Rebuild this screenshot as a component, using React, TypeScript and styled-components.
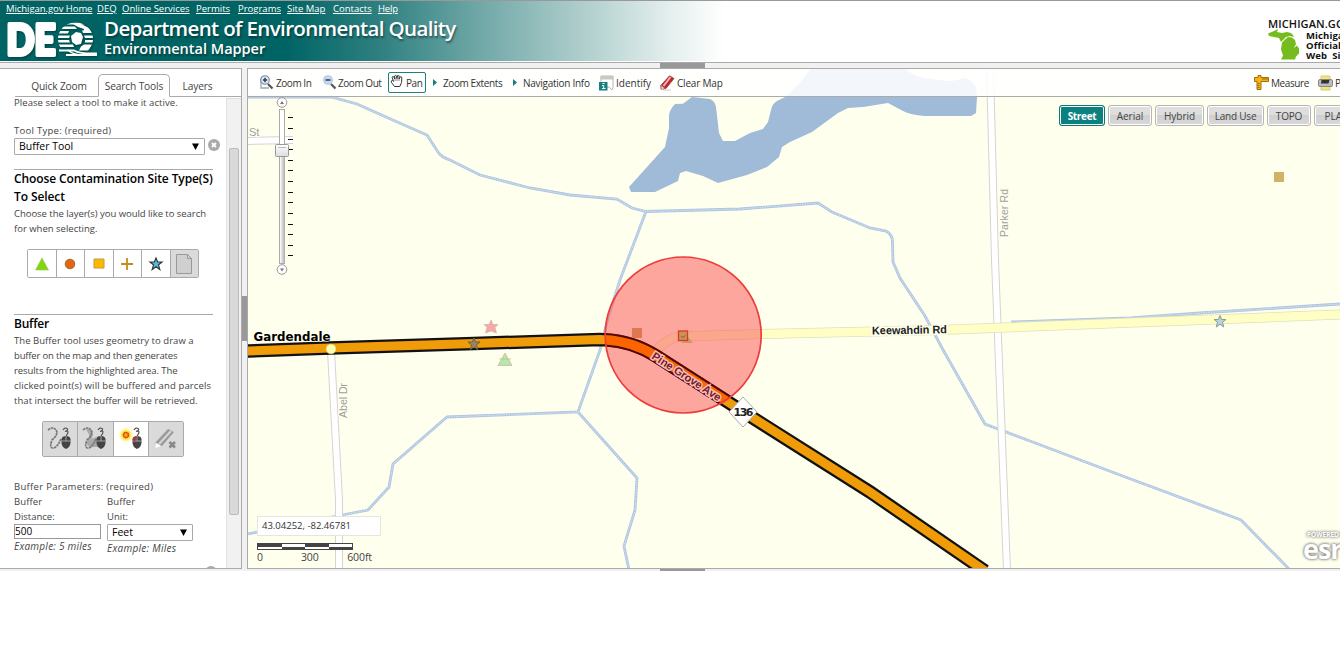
import React from "react";
import styled, { createGlobalStyle, css } from "styled-components";

const Global = createGlobalStyle`
  * { box-sizing: border-box; }
  html, body { margin: 0; padding: 0; background: #fff; overflow: hidden; }
  body { font-family: "Open Sans", "Liberation Sans", sans-serif; font-size: 10px; color: #444; }
  p, h1, h2, h3 { margin: 0; font-weight: normal; }
`;

const Page = styled.div`width: 1340px; height: 654px; overflow: hidden; display: flex; flex-direction: column;`;

const Header = styled.header`
  height: 63px; flex: none; display: flex; flex-direction: column; position: relative;
  border-top: 1px solid #999; border-bottom: 1px solid #aaa;
  background: linear-gradient(90deg, #006363 0, #006464 285px, #2f8080 380px, #70a8a7 480px, #b3d1cf 590px, #e4efee 670px, #fff 725px);
  &::after { content: ""; position: absolute; left: 0; right: 0; bottom: 0; height: 1px; background: #fff; }
`;
const TopLinks = styled.nav`display: flex; height: 17px; padding-left: 6px; gap: 7px; line-height: 15px; flex: none;`;
const TopLink = styled.a<{ $w: number; $ls?: number }>`
  color: #fff; text-decoration: underline; white-space: nowrap; font-size: 9.5px;
  width: ${p => p.$w}px; letter-spacing: ${p => p.$ls ?? 0}px;
`;
const Brand = styled.div`display: flex; padding-left: 4px; height: 44px;`;
const Titles = styled.div`padding-left: 7px; margin-top: -2px; color: #fff; text-shadow: 1px 2px 2px rgba(0,30,30,.55); white-space: nowrap; flex: 1;`;
const Title = styled.h1`font: 600 20.5px/24px "Open Sans", sans-serif; letter-spacing: -0.64px;`;
const Subtitle = styled.h2`font: 600 14.5px/18px "Open Sans", sans-serif; letter-spacing: 0;`;
const StateSite = styled.div`
  width: 72px; flex: none; color: #111; white-space: nowrap;
  font: 600 11px/12px "Open Sans", sans-serif; letter-spacing: .1px;
`;
const StateRow = styled.div`display: flex; gap: 6px; font: 700 9.5px/10px "Open Sans", sans-serif; padding-top: 1px; svg { flex: none; margin-top: -2px; }`;

const HGap = styled.div`height: 5px; flex: none; background: #f1f1f1; padding-left: 660px;`;
const HGrip = styled.div`width: 45px; height: 100%; background: #999;`;
const Body = styled.main`height: 501px; flex: none; display: flex;`;
const VGap = styled.div`width: 5px; flex: none; background: #f1f1f1; padding-top: 228px;`;
const VGrip = styled.div`width: 5px; height: 45px; background: #999;`;

const Side = styled.aside`width: 242px; flex: none; border: 1px solid #aaa; border-left: 0; display: flex; flex-direction: column; overflow: hidden;`;
const Tabs = styled.div`height: 28px; flex: none; display: flex; align-items: flex-end; padding-left: 15px;`;
const Tab = styled.div<{ $w: number; $active?: boolean; $pad?: number }>`
  width: ${p => p.$w}px; height: 23px; line-height: 24px; text-align: center; font-size: 10.2px; letter-spacing: -.15px; white-space: nowrap;
  border-bottom: 1px solid #aaa; padding-left: ${p => p.$pad ?? 0}px;
  ${p => p.$active && css`border: 1px solid #aaa; border-bottom-color: #fff; border-radius: 5px 5px 0 0; line-height: 22px;`}
`;
const TabFill = styled.div`flex: 1; height: 23px; border-bottom: 1px solid #aaa;`;
const Scroller = styled.div`flex: 1; min-height: 0; display: flex; overflow: hidden;`;
const Content = styled.div`flex: 1; padding-left: 14px; margin-top: -2px; white-space: nowrap; line-height: 15px;`;
const Track = styled.div`width: 15px; flex: none; margin-top: 1px; padding: 49px 2px 0; background: #f1f1f1; border-left: 1px solid #e2e2e2; border-top: 1px solid #ddd;`;
const Thumb = styled.div`width: 10px; height: 367px; background: #d9d9d9; border: 1px solid #bbb; border-radius: 2px;`;

const Line = styled.p<{ $ls?: number; $gap?: number }>`height: 15px; letter-spacing: ${p => p.$ls ?? 0}px; margin-bottom: ${p => p.$gap ?? 0}px; font-size: 9.5px;`;
const Heading = styled.h3<{ $ls?: number }>`font-weight: 600; font-size: 12px; line-height: 18px; color: #000; letter-spacing: ${p => p.$ls ?? 0}px;`;
const Rule = styled.div<{ $top: number }>`width: 199px; height: 1px; background: #aaa; margin-top: ${p => p.$top}px;`;
const Row = styled.div`display: flex;`;
const Select = styled.div<{ $w: number }>`
  width: ${p => p.$w}px; height: 17px; border: 1px solid #aaa; border-radius: 1px; color: #000; padding: 0 5px 0 4px;
  display: flex; justify-content: space-between; align-items: center; font-size: 10.5px; line-height: 15px;
`;
const Field = styled.div`width: 87px; height: 15px; border: 1px solid #999; color: #000; font-size: 10px; line-height: 13px;`;
const Down = () => <svg width="7" height="7" viewBox="0 0 7 7"><path d="M0 .5H7L3.500 7Z" fill="#000" /></svg>;
const Clear = styled.div`padding: 1px 0 0 3px; height: 17px;`;
const ButtonBar = styled.div<{ $h: number; $left: number; $w: number }>`
  display: flex; height: ${p => p.$h}px; width: ${p => p.$w}px; margin-left: ${p => p.$left}px;
  border: 1px solid #aaa; border-radius: 2px; overflow: hidden;
`;
const BarButton = styled.div<{ $off?: boolean }>`
  flex: 1; display: flex; align-items: center; justify-content: center; background: ${p => p.$off ? "#dadada" : "#fff"};
  & + & { border-left: 1px solid #aaa; }
`;
const Column = styled.div<{ $w: number }>`width: ${p => p.$w}px;`;
const Hint = styled.p<{ $ls?: number }>`font-style: italic; letter-spacing: ${p => p.$ls ?? 0}px; font-size: 10px;`;
const Params = styled.div`padding-top: 22px;`;
const NextClear = styled.div`width: 12px; height: 12px; border-radius: 6px; background: #aaa; margin: 10px 0 0 191px;`;
const BottomGap = styled(HGap)`height: 2px;`;

const MapPane = styled.section`flex: 1; min-width: 0; border: 1px solid #aaa; border-right: 0; position: relative; overflow: hidden; background: #ffffee;`;
const MapSvg = styled.svg`position: absolute; left: 0; top: 0; display: block;`;
const Toolbar = styled.div`
  position: absolute; left: 0; top: 0; right: 0; height: 28px; padding: 0 0 0 11px; border-bottom: 1px solid #aaa;
  background: rgba(255,255,255,.88); display: flex; align-items: center; white-space: nowrap; overflow: hidden;
`;
const Tool = styled.div<{ $w: number; $ls?: number; $gap?: number }>`
  width: ${p => p.$w}px; height: 28px; flex: none; display: flex; align-items: center; gap: ${p => p.$gap ?? 2}px;
  letter-spacing: ${p => p.$ls ?? 0}px; font-size: 10px; color: #333;
  span { padding-top: 1px; }
  svg { flex: none; }
`;
const PanTool = styled(Tool)`height: 21px; border: 1px solid #1a8080; border-radius: 2px; padding-left: 1px; margin-right: 7px; svg { margin-top: -3px; }`;
const Spacer = styled.div`flex: 1;`;
const Layers = styled.div`position: absolute; left: 811px; top: 36px; display: flex; gap: 3px;`;
const Layer = styled.div<{ $w: number; $on?: boolean; $ls?: number }>`
  width: ${p => p.$w}px; height: 21px; border-radius: 3px; border: 1px solid ${p => p.$on ? "#0a7a78" : "#b5b5b5"};
  box-shadow: inset 0 0 0 1px #fff; text-align: center; line-height: 20px; font-size: 10px; flex: none;
  color: ${p => p.$on ? "#fff" : "#444"}; font-weight: ${p => p.$on ? 700 : 400}; letter-spacing: ${p => p.$ls ?? 0}px;
  background: ${p => p.$on ? "#0b8280" : "linear-gradient(#dedede 0 48%, #d0d0d0 50%, #d8d8d8)"};
`;
const Coords = styled.div`position: absolute; left: 9px; top: 447px; width: 124px; height: 20px; background: #fff; border: 1px solid #e6e6dc; padding-left: 4px; line-height: 18px; font-size: 9.5px; color: #333;`;
const ScaleBar = styled.div`position: absolute; left: 9px; top: 474px; width: 96px; height: 7px; border: 1px solid #444; display: grid; grid-template-columns: repeat(4, 1fr); grid-template-rows: 1fr 1fr;`;
const ScaleCell = styled.div<{ $dark?: boolean }>`background: ${p => p.$dark ? "#444" : "#fff"};`;
const ScaleText = styled.div`position: absolute; left: 9px; top: 481px; width: 115px; display: flex; font-size: 10.5px; line-height: 14px; color: #444; span:nth-child(2) { margin: 0 auto 0 38px; } span { letter-spacing: -.1px; }`;
const Esri = styled.div`
  position: absolute; left: 1056px; top: 462px; color: #fff; white-space: nowrap; text-shadow: 0 0 3px #777, 0 0 3px #888;
  small { display: block; font: 700 6.5px/8px "Open Sans", sans-serif; padding-left: 3px; }
  b { display: block; font: 700 27px/20px "Open Sans", sans-serif; letter-spacing: -1px; margin-left: -1px; }
`;

const Globe = () => (
  <svg width="93" height="42" viewBox="4 18 93 42">
    <defs><clipPath id="globe"><ellipse cx="75.500" cy="39" rx="17.500" ry="16.500" /></clipPath></defs>
    <g fill="#fff" stroke="#fff" style={{ filter: "drop-shadow(1px 1.5px .8px rgba(0,30,30,.5))" }}>
      <text x="6.500" y="54.500" fontFamily="Lato, Open Sans" fontWeight="900" fontSize="41.500" strokeWidth="4" strokeLinejoin="round" textLength="49" lengthAdjust="spacingAndGlyphs">DE</text>
      <g clipPath="url(#globe)" stroke="none">
        <path d="M66 22.500h20v2H62zM60 26.500h15l2 2.500H58zM58 31h11l-1 2.500H56zM57 35.500h13l-1 2.500H56zM56 40h13l1 2.500H57zM57 44.500h16l1 2.500H59z" />
        <path d="M73 24h8l10 5v4h-8l1-4-6-2zM82 30.500h10v2.500h-9zM84 35.500h10v2.500h-9zM76 32l5 1 2 4-2 7-5 1-4-3-1-6zM85 40h8v2.500h-8zM84 44.500h8l-3 6H79l2-4z" />
      </g>
      <path d="M59 50.500H74Q80 54 97 53.500M66 55H97" fill="none" strokeWidth="1.900" />
      <path d="M68 50q5 5 15 5" strokeWidth="1.500" fill="none" />
    </g>
  </svg>
);
const Michigan = () => (
  <svg width="32" height="32" viewBox="0 0 32 32" fill="#77bc1f">
    <path d="M0 4.500l6-2.500 4-2-1 3 5 1 5-1 4 1 2 2 1 2-4-1-4 1-3 3-2 2-2-4-5-1-5-1z" />
    <path d="M20 8l4 .5 3 2.500 1 4-2 4 3-2.500 2 3 0 5-3 3-1 3H13l2-4-2-6 1-7 3-3z" />
  </svg>
);
const Magnifier = ({ plus }: { plus?: boolean }) => (
  <svg width="15" height="15" viewBox="0 0 15 15">
    {plus && <path d="M2 6v7h8M2 4v8" fill="none" stroke="#9aa8b8" strokeWidth="1.300" />}
    <path d="M9 9l4.500 4.500" stroke="#555" strokeWidth="2.200" />
    <circle cx="6" cy="5" r="4.300" fill={plus ? "#dce8f4" : "#c7d8f0"} stroke={plus ? "#7b8998" : "#b4c2d8"} strokeWidth="1.100" />
    <path d={plus ? "M3.800 5h4.400M6 2.800v4.400" : "M3.500 5h5"} stroke="#253e68" strokeWidth="1.500" />
  </svg>
);
const Hand = () => (
  <svg width="14" height="14" viewBox="0 0 14 14"><path d="M4.500 12.500L1.500 8.500Q.5 6.500 2.500 6.500L3.500 7.500 2.200 3.500Q2.300 2 3.700 2.700L5 5 4.500 2Q5.300.5 6.300 1.800L7 4.600 7.500 1.600Q8.700.7 9.200 2L9 5 10.300 2.800Q11.700 2.300 11.800 3.800L11.500 8.500 9.800 12.500Z" fill="#fff" stroke="#333" strokeWidth="1" /><path d="M5 5v2M7 4.500V7M9 5v2" stroke="#555" strokeWidth=".7" /></svg>
);
const Arrow = () => <svg width="5" height="7" viewBox="0 0 5 7"><path d="M0 0L4 3.500 0 7Z" fill="#167f7e" /></svg>;
const IdentifyIcon = () => (
  <svg width="15" height="16" viewBox="0 0 15 16"><path d="M2 1h12v11l-1 3-3-3H2z" fill="#fff" stroke="#b8b8b8" /><path d="M1.500 1h13v3.500h-13z" fill="#c8c9c0" /><path d="M0 7h8.500v8.500H0z" fill="#17827f" /><path d="M3.500 8.500h2M3 10.500h1.700v3M3 13.500h3.500" stroke="#fff" fill="none" /></svg>
);
const EraserIcon = () => (
  <svg width="15" height="16" viewBox="0 0 15 16"><path d="M3 15h8" stroke="#ccc" /><path d="M9.500.8L14 3.500 6 13.500 1 14 .8 10.500Z" fill="#c9252b" stroke="#873035" strokeWidth=".7" /><path d="M10.500 2L3.500 11" stroke="#f2b6b4" strokeWidth="2" /><path d="M1 10.500l4 3-3.700.8z" fill="#f4e9e6" stroke="#866" strokeWidth=".5" /></svg>
);
const MeasureIcon = () => (
  <svg width="15" height="16" viewBox="0 0 15 16"><path d="M.5 2.500H4V.5h3v2h7.500v4H7v8H3v-8H.5z" fill="#f4b418" stroke="#a66d08" /><path d="M9 3v2m2-2v2m2-2v2M3.500 8.500h2m-2 2h2m-2 2h2" stroke="#855500" strokeWidth=".8" /></svg>
);
const PrintIcon = () => (
  <svg width="15" height="16" viewBox="0 0 15 16"><path d="M3 1h9v4H3zM3 11h9v4H3z" fill="#f5e676" stroke="#d8cc75" /><rect x=".5" y="4.500" width="14" height="7" rx="1.500" fill="#b9bdc0" stroke="#888" /><path d="M3.500 5h8l-1 3.500H3z" fill="#333" /></svg>
);
const star = "M0-6L1.600-2H6L2.500.8 3.800 5.500 0 2.800-3.800 5.500-2.500.8-6-2H-1.600Z";

const Mouse = ({ x, red }: { x: number; red?: boolean }) => (
  <g transform={`translate(${x} 0)`}>
    <path d="M-3 3Q-1 0 1 1.500T-1 4.500Q2 3.500 2 5T0 9" fill="none" stroke="#555" strokeWidth="1.200" />
    <path d="M-4.500 12Q-4 9 0 9T4.500 12V16Q4 20.500 0 22-4 20.500-4.500 16Z" fill="#444" />
    <path d="M-4.500 14h9M0 9v5" stroke="#bbb" strokeWidth=".8" />
    {red && <path d="M-4.300 13.500V12l1.500-2H-.5v3.500z" fill="#b93535" />}
  </g>
);
const Squiggle = ({ filled }: { filled?: boolean }) => (
  <svg width="26" height="24" viewBox="0 0 26 24">
    {filled && <path d="M4 3Q8 0 10 5T9 12L17 9V20H8Q3 18 6 13 9 8 4 3Z" fill="#aaa" />}
    <path d="M1 3Q6-1 9 3T5 13Q2 21 6 21T14 12" fill="none" stroke="#777" strokeWidth="1.700" strokeDasharray="2.500 .6" />
    <Mouse x={19} />
  </svg>
);
const PointMouse = () => (
  <svg width="26" height="24" viewBox="0 0 26 24">
    <defs><radialGradient id="glow"><stop offset=".4" stopColor="#ffd800" /><stop offset="1" stopColor="#fff7b0" stopOpacity="0" /></radialGradient></defs>
    <circle cx="8" cy="8" r="8" fill="url(#glow)" /><circle cx="8" cy="8" r="2.500" fill="#fa2" stroke="#d33a12" strokeWidth="1.600" strokeDasharray="1.500 .4" />
    <Mouse x={19} red />
  </svg>
);
const GrayEraser = () => (
  <svg width="26" height="24" viewBox="0 0 26 24"><path d="M15 2l6 3L9 19l-6 1-1-4z" fill="#999" /><path d="M18 4L6 17" stroke="#d5d5d5" strokeWidth="2.200" /><path d="M2.500 15.500l6 3.500-6 2z" fill="#fff" /><path d="M16.500 15l5.500 5.500m0-5.500l-5.500 5.500" stroke="#888" strokeWidth="2.600" /></svg>
);

const stream = "M248 97H331L357 104 395 121 427 135 438 152Q441 157 450 160L480 175 530 188 570 195 617 199 632 208 646 211.500 740 209 818 203 832 212 870 228 886 231Q893 235 892.500 243L893 262 900 278 925 316 942 348 985 424 1030 441 1120 475 1241 520 1290 570M646 211.500L620 280 608 318 600 350 578 412 447 417 393 464 389 487 368 510 342 515 248 534M578 412L637 478 635 510 624 546 629 570M1011 322L1130 318 1200 313 1340 304";
const road = "M246 351L330 348 474 343.500 600 339.500Q631 340 656 356L742 411 870 492 985 571";
const lake = "M629 187L665 147 669 128V115Q670 109 675 104L683 103.700 692 97 710 99Q715 101 716 107L719 133 723 141H735L750 133 763 129 768 122 771 110Q772 104 777 101L785 97 800 83 811 68H905Q914 77 925 78L947 81Q956 81 963 78 972 79 976 87L977 97 976 113 971 116H925Q910 115 903 111L888 103 863 107 848 108 838 113 812 132 790 142 782 147 779 157 767 167 747 175 718 183 703 176 686 171 680 173 678 181 655 192H631Z";
const ticks = [117, 128, 139, 149, 160, 170, 181, 192, 202, 213, 224, 234, 245, 255];

const StreetMap = () => (
  <MapSvg width="1092" height="499" viewBox="248 69 1092 499" fontFamily="Liberation Sans, sans-serif">
    <defs>
      <clipPath id="buffer"><circle cx="683.200" cy="335" r="77.500" /></clipPath>
      <linearGradient id="rail"><stop stopColor="#fff" /><stop offset="1" stopColor="#aaa" /></linearGradient>
      <linearGradient id="knob" x2="0" y2="1"><stop stopColor="#fff" /><stop offset="1" stopColor="#ddd" /></linearGradient>
    </defs>
    <path d={lake} fill="#9fbbd8" />
    <path d={stream} fill="none" stroke="#adc5e0" strokeWidth="2.800" />
    <path d={stream} fill="none" stroke="#d5e0ef" strokeWidth="1.200" strokeDasharray="1.500 1" />
    <g fill="none">
      <path d="M990 69L995 260 1007 570M331 351L339 500V570M248 141L293 140" stroke="#d4d4d4" strokeWidth="8" />
      <path d="M990 69L995 260 1007 570M331 351L339 500V570M248 141L293 140" stroke="#fff" strokeWidth="6" />
      <path d="M652 355Q666 338 680 336.500L761 334 940 330 1340 314.500" stroke="#e0dfbd" strokeWidth="10" />
      <path d="M652 355Q666 338 680 336.500L761 334 940 330 1340 314.500" stroke="#ffffc5" strokeWidth="8.500" />
      <path d={road} stroke="#111" strokeWidth="13.500" />
      <path d={road} stroke="#f09b08" strokeWidth="9" />
    </g>
    <circle cx="331" cy="349" r="4.800" fill="#ffffb0" stroke="#e6d98a" strokeWidth=".7" />
    <circle cx="683.200" cy="335" r="78" fill="#fa5d5d" fillOpacity=".55" />
    <g fill="none" clipPath="url(#buffer)">
      <path d={road} stroke="#520808" strokeWidth="13.500" />
      <path d={road} stroke="#fb6500" strokeWidth="9.500" />
    </g>
    <circle cx="683.200" cy="335" r="78" fill="none" stroke="#ee3c3c" strokeWidth="1.700" />
    <rect x="632" y="328" width="10" height="10" fill="#de7850" />
    <path d="M688 337l5 6H681z" fill="#c99a60" />
    <rect x="678.500" y="331" width="9" height="9.500" fill="#c99355" stroke="#dc3828" strokeWidth="1.300" />
    <path d="M681 336l2 1.500 2.500-2" fill="none" stroke="#6f6b35" />
    <rect x="1274" y="172" width="10" height="10" fill="#d4b069" />
    <path d={star} transform="translate(474 344)" fill="#98875c" stroke="#6c634d" />
    <path d={star} transform="translate(1220 321.500)" fill="#bad2dc" stroke="#879c9f" />
    <path d="M491 320l2 4.500h5l-3 3 1.500 5.500-5.500-2-5.500 2L487 327.500l-3-3h5z" fill="#f5aaaa" stroke="#ccaaa0" strokeWidth=".6" />
    <path d="M499 359h12M505 353l7 12.500H498z" fill="#b5e8ae" stroke="#c9b58b" strokeWidth=".7" />
    <path d="M743 397l14 15-14 15-14-15z" fill="#fff" stroke="#aaa" />
    <text x="743.500" y="416" textAnchor="middle" fontFamily="DejaVu Sans" fontWeight="700" fontSize="11" textLength="20" fill="#222">136</text>
    <text x="253.500" y="341" fontFamily="DejaVu Sans" fontWeight="700" fontSize="11.500" textLength="77" lengthAdjust="spacingAndGlyphs" fill="#000" stroke="#ffffee" strokeWidth="1" paintOrder="stroke">Gardendale</text>
    <text x="872" y="334.500" transform="rotate(-1 872 334)" fontWeight="700" fontSize="11.300" textLength="75" lengthAdjust="spacingAndGlyphs" fill="#222" stroke="#fffff0" strokeWidth="3" paintOrder="stroke">Keewahdin Rd</text>
    <text transform="translate(651 358) rotate(33)" fontSize="11" fontWeight="700" textLength="80" lengthAdjust="spacingAndGlyphs" fill="#71202c" stroke="#ffbcb4" strokeWidth="3" paintOrder="stroke">Pine Grove Ave</text>
    <g fill="#a0a0a0" fontSize="11" stroke="#ffffee" strokeWidth="2" paintOrder="stroke">
      <text x="249" y="136">St</text>
      <text transform="translate(1008 237) rotate(-90)" fontSize="10.500" textLength="48">Parker Rd</text>
      <text transform="translate(347 418) rotate(-90)" textLength="35">Abel Dr</text>
    </g>
    <rect x="279.500" y="109.500" width="5" height="154" fill="#fff" stroke="#aaa" />
    <rect x="280" y="156" width="5" height="107" fill="url(#rail)" />
    <path d={ticks.map(y => `M288 ${y + .5}h5`).join("")} stroke="#111" />
    <rect x="275.500" y="144.500" width="13" height="12" rx="1" fill="url(#knob)" stroke="#999" />
    <path d="M278 147.500h8" stroke="#bbb" />
    <g fill="#fff" stroke="#999"><circle cx="282" cy="102.500" r="4.800" /><circle cx="282" cy="269.500" r="4.800" /></g>
    <path d="M280 104h4l-2-3zM280 268.500h4l-2 3z" fill="#777" />
  </MapSvg>
);

export default function App() {
  return (
    <Page>
      <Global />
      <Header>
        <TopLinks>
          <TopLink $w={84} $ls={-0.06}>Michigan.gov Home</TopLink><TopLink $w={18}>DEQ</TopLink>
          <TopLink $w={67}>Online Services</TopLink><TopLink $w={35}>Permits</TopLink>
          <TopLink $w={42}>Programs</TopLink><TopLink $w={39}>Site Map</TopLink>
          <TopLink $w={38}>Contacts</TopLink><TopLink $w={20} $ls={-0.2}>Help</TopLink>
        </TopLinks>
        <Brand>
          <Globe />
          <Titles><Title>Department of Environmental Quality</Title><Subtitle>Environmental Mapper</Subtitle></Titles>
          <StateSite>MICHIGAN.GOV<StateRow><Michigan /><div>Michigan's<br />Official<br />Web &nbsp;Site</div></StateRow></StateSite>
        </Brand>
      </Header>
      <HGap><HGrip /></HGap>
      <Body>
        <Side>
          <Tabs><Tab $w={83} $pad={5}>Quick Zoom</Tab><Tab $w={72} $active>Search Tools</Tab><Tab $w={55}>Layers</Tab><TabFill /></Tabs>
          <Scroller>
            <Content>
              <Line $gap={13} $ls={.06}>Please select a tool to make it active.</Line>
              <Line $ls={.28}>Tool Type: (required)</Line>
              <Row><Select $w={191}>Buffer Tool<Down /></Select>
                <Clear><svg width="12" height="12" viewBox="0 0 12 12"><circle cx="6" cy="6" r="6" fill="#aaa" /><path d="M4 4l4 4M8 4L4 8" stroke="#fff" strokeWidth="1.800" /></svg></Clear></Row>
              <Rule $top={14} />
              <Heading $ls={-0.1}>Choose Contamination Site Type(S)<br />To Select</Heading>
              <Line $ls={-0.04}>Choose the layer(s) you would like to search</Line>
              <Line $gap={13}>for when selecting.</Line>
              <ButtonBar $h={29} $w={172} $left={13}>
                <BarButton><svg width="16" height="16"><path d="M8 2l6.500 12h-13z" fill="#7fd60c" stroke="#a4c46c" strokeWidth=".7" /></svg></BarButton>
                <BarButton><svg width="16" height="16"><circle cx="8" cy="8" r="4.800" fill="#e5650c" stroke="#a06a35" /></svg></BarButton>
                <BarButton><svg width="16" height="16"><path d="M3 3h10v9H3z" fill="#fcb900" stroke="#c09c45" /></svg></BarButton>
                <BarButton><svg width="16" height="16"><path d="M8 2v12M2 8h12" stroke="#c68c1e" strokeWidth="1.800" /></svg></BarButton>
                <BarButton><svg width="16" height="16"><path d={star} transform="translate(8 8)" fill="#55b7e8" stroke="#343c28" strokeWidth="1.200" /></svg></BarButton>
                <BarButton $off><svg width="18" height="20"><path d="M1.500.5h11l4 4v15h-15zM12.500.5v4h4" fill="#d0d0d0" stroke="#999" /></svg></BarButton>
              </ButtonBar>
              <Rule $top={36} />
              <Heading $ls={-0.25}>Buffer</Heading>
              <Line $ls={.05}>The Buffer tool uses geometry to draw a</Line>
              <Line $ls={-0.17}>buffer on the map and then generates</Line>
              <Line $ls={-0.08}>results from the highlighted area. The</Line>
              <Line $ls={.14}>clicked point(s) will be buffered and parcels</Line>
              <Line $gap={13} $ls={.05}>that intersect the buffer will be retrieved.</Line>
              <ButtonBar $h={36} $w={142} $left={28}>
                <BarButton $off><Squiggle /></BarButton><BarButton $off><Squiggle filled /></BarButton>
                <BarButton><PointMouse /></BarButton><BarButton $off><GrayEraser /></BarButton>
              </ButtonBar>
              <Params>
                <Line $ls={.31}>Buffer Parameters: (required)</Line>
                <Row>
                  <Column $w={93}><Line $ls={.1}>Buffer</Line><Line>Distance:</Line><Field>500</Field><Hint $ls={.25}>Example: 5 miles</Hint></Column>
                  <Column $w={86}><Line $ls={.1}>Buffer</Line><Line>Unit:</Line><Select $w={86}>Feet<Down /></Select><Hint $ls={.28}>Example: Miles</Hint></Column>
                </Row>
              </Params>
              <NextClear />
            </Content>
            <Track><Thumb /></Track>
          </Scroller>
        </Side>
        <VGap><VGrip /></VGap>
        <MapPane>
          <StreetMap />
          <Toolbar>
            <Tool $w={63} $ls={-0.45}><Magnifier plus /><span>Zoom In</span></Tool>
            <Tool $w={66} $gap={1} $ls={-0.45}><Magnifier /><span>Zoom Out</span></Tool>
            <PanTool $w={38} $ls={-0.4}><Hand /><span>Pan</span></PanTool>
            <Tool $w={80} $gap={5} $ls={-0.4}><Arrow /><span>Zoom Extents</span></Tool>
            <Tool $w={86} $gap={5} $ls={-0.27}><Arrow /><span>Navigation Info</span></Tool>
            <Tool $w={61}><IdentifyIcon /><span>Identify</span></Tool>
            <Tool $w={65} $ls={-0.2}><EraserIcon /><span>Clear Map</span></Tool>
            <Spacer />
            <Tool $w={64} $ls={-0.4}><MeasureIcon /><span>Measure</span></Tool>
            <Tool $w={22}><PrintIcon /><span>Print</span></Tool>
          </Toolbar>
          <Layers>
            <Layer $w={46} $on $ls={-0.3}>Street</Layer><Layer $w={44}>Aerial</Layer><Layer $w={49}>Hybrid</Layer>
            <Layer $w={57} $ls={-0.2}>Land Use</Layer><Layer $w={44} $ls={-0.2}>TOPO</Layer><Layer $w={44}>PLAT</Layer>
          </Layers>
          <Coords>43.04252, -82.46781</Coords>
          <ScaleBar>{[0, 1, 0, 1, 1, 0, 1, 0].map((d, i) => <ScaleCell key={i} $dark={!d} />)}</ScaleBar>
          <ScaleText><span>0</span><span>300</span><span>600ft</span></ScaleText>
          <Esri><small>POWERED BY</small><b>esri</b></Esri>
        </MapPane>
      </Body>
      <BottomGap><HGrip /></BottomGap>
    </Page>
  );
}
